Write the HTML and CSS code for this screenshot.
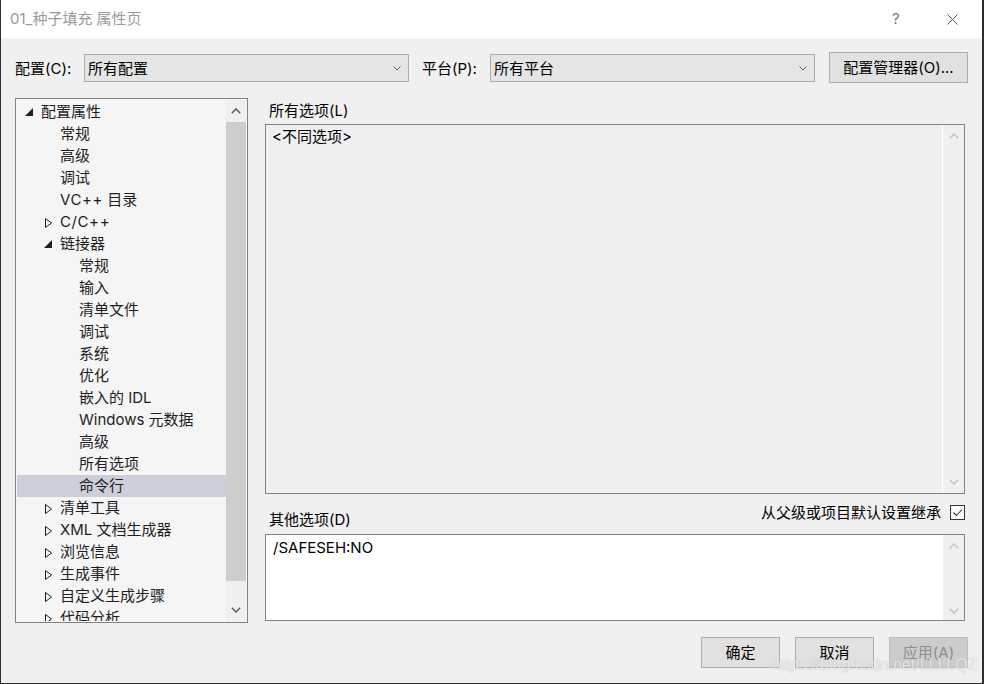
FILE: index.html
```html
<!DOCTYPE html>
<html lang="zh-CN">
<head>
<meta charset="utf-8">
<title>01_种子填充 属性页</title>
<link rel="stylesheet" href="styles.css">
</head>
<body>
<div class="window">
  <div class="titlebar">
    <span class="title">01_种子填充 属性页</span>
    <span class="help">?</span>
    <svg class="close" width="11" height="11" viewBox="0 0 11 11"><path d="M0.5 0.5 L10.5 10.5 M10.5 0.5 L0.5 10.5" stroke="#555" stroke-width="1" fill="none"/></svg>
  </div>
  <div class="content">
    <div class="config-row">
      <span class="lbl lbl-config">配置(C):</span>
      <div class="combo"><span class="combo-text">所有配置</span><svg class="chev" width="8" height="5" viewBox="0 0 8 5"><path d="M0.5 0.5 L4 4 L7.5 0.5" stroke="#606060" stroke-width="1" fill="none"/></svg></div>
      <span class="lbl lbl-platform">平台(P):</span>
      <div class="combo"><span class="combo-text">所有平台</span><svg class="chev" width="8" height="5" viewBox="0 0 8 5"><path d="M0.5 0.5 L4 4 L7.5 0.5" stroke="#606060" stroke-width="1" fill="none"/></svg></div>
      <button class="btn btn-manager">配置管理器(O)...</button>
    </div>
    <div class="main">
      <div class="tree">
        <div class="tree-list">
          <div class="row l0"><span class="tw"><svg width="8" height="8" viewBox="0 0 8 8"><polygon points="8,0 8,8 0,8" fill="#1e1e1e"/></svg></span>配置属性</div>
          <div class="row l1"><span class="tw"></span>常规</div>
          <div class="row l1"><span class="tw"></span>高级</div>
          <div class="row l1"><span class="tw"></span>调试</div>
          <div class="row l1"><span class="tw"></span><span class="pp">VC++</span>&nbsp;目录</div>
          <div class="row l1"><span class="tw tc"><svg width="7" height="10" viewBox="0 0 7 10"><polygon points="0.5,0.5 6.5,5 0.5,9.5" fill="none" stroke="#1e1e1e" stroke-width="1"/></svg></span><span class="pp">C/C++</span></div>
          <div class="row l1"><span class="tw"><svg width="8" height="8" viewBox="0 0 8 8"><polygon points="8,0 8,8 0,8" fill="#1e1e1e"/></svg></span>链接器</div>
          <div class="row l2"><span class="tw"></span>常规</div>
          <div class="row l2"><span class="tw"></span>输入</div>
          <div class="row l2"><span class="tw"></span>清单文件</div>
          <div class="row l2"><span class="tw"></span>调试</div>
          <div class="row l2"><span class="tw"></span>系统</div>
          <div class="row l2"><span class="tw"></span>优化</div>
          <div class="row l2"><span class="tw"></span>嵌入的 IDL</div>
          <div class="row l2"><span class="tw"></span>Windows 元数据</div>
          <div class="row l2"><span class="tw"></span>高级</div>
          <div class="row l2"><span class="tw"></span>所有选项</div>
          <div class="row l2 selected"><span class="tw"></span>命令行</div>
          <div class="row l1"><span class="tw tc"><svg width="7" height="10" viewBox="0 0 7 10"><polygon points="0.5,0.5 6.5,5 0.5,9.5" fill="none" stroke="#1e1e1e" stroke-width="1"/></svg></span>清单工具</div>
          <div class="row l1"><span class="tw tc"><svg width="7" height="10" viewBox="0 0 7 10"><polygon points="0.5,0.5 6.5,5 0.5,9.5" fill="none" stroke="#1e1e1e" stroke-width="1"/></svg></span>XML 文档生成器</div>
          <div class="row l1"><span class="tw tc"><svg width="7" height="10" viewBox="0 0 7 10"><polygon points="0.5,0.5 6.5,5 0.5,9.5" fill="none" stroke="#1e1e1e" stroke-width="1"/></svg></span>浏览信息</div>
          <div class="row l1"><span class="tw tc"><svg width="7" height="10" viewBox="0 0 7 10"><polygon points="0.5,0.5 6.5,5 0.5,9.5" fill="none" stroke="#1e1e1e" stroke-width="1"/></svg></span>生成事件</div>
          <div class="row l1"><span class="tw tc"><svg width="7" height="10" viewBox="0 0 7 10"><polygon points="0.5,0.5 6.5,5 0.5,9.5" fill="none" stroke="#1e1e1e" stroke-width="1"/></svg></span>自定义生成步骤</div>
          <div class="row l1"><span class="tw tc"><svg width="7" height="10" viewBox="0 0 7 10"><polygon points="0.5,0.5 6.5,5 0.5,9.5" fill="none" stroke="#1e1e1e" stroke-width="1"/></svg></span>代码分析</div>
        </div>
        <div class="vscroll">
          <div class="sb-btn"><svg width="10" height="6" viewBox="0 0 10 6"><polyline points="0.8,5.2 5,1 9.2,5.2" fill="none" stroke="#606060" stroke-width="1.6"/></svg></div>
          <div class="sb-track"><div class="sb-thumb"></div></div>
          <div class="sb-btn"><svg width="10" height="6" viewBox="0 0 10 6"><polyline points="0.8,0.8 5,5 9.2,0.8" fill="none" stroke="#606060" stroke-width="1.6"/></svg></div>
        </div>
      </div>
      <div class="right">
        <div class="sect-label">所有选项(L)</div>
        <div class="box box-all">
          <div class="box-text">&lt;不同选项&gt;</div>
          <div class="box-scroll scroll-all">
            <svg width="10" height="6" viewBox="0 0 10 6"><polyline points="0.8,5.2 5,1 9.2,5.2" fill="none" stroke="#c4c4c4" stroke-width="1.6"/></svg>
            <svg width="10" height="6" viewBox="0 0 10 6"><polyline points="0.8,0.8 5,5 9.2,0.8" fill="none" stroke="#c4c4c4" stroke-width="1.6"/></svg>
          </div>
        </div>
        <div class="middle">
          <div class="sect-label other-label">其他选项(D)</div>
          <div class="inherit">
            <span>从父级或项目默认设置继承</span>
            <span class="checkbox"><svg width="13" height="13" viewBox="0 0 13 13"><polyline points="2.5,6.5 5.5,9.5 11,3.5" fill="none" stroke="#333" stroke-width="1.1"/></svg></span>
          </div>
        </div>
        <div class="box box-other">
          <div class="box-text other-text">/SAFESEH:NO</div>
          <div class="box-scroll scroll-other">
            <svg width="10" height="6" viewBox="0 0 10 6"><polyline points="0.8,5.2 5,1 9.2,5.2" fill="none" stroke="#c4c4c4" stroke-width="1.6"/></svg>
            <svg width="10" height="6" viewBox="0 0 10 6"><polyline points="0.8,0.8 5,5 9.2,0.8" fill="none" stroke="#c4c4c4" stroke-width="1.6"/></svg>
          </div>
        </div>
      </div>
    </div>
    <div class="buttons">
      <button class="btn btn-dlg">确定</button>
      <button class="btn btn-dlg">取消</button>
      <button class="btn btn-dlg disabled">应用(A)</button>
    </div>
  </div>
  <div class="watermark">https://blog.csdn.net/LLLLQZ</div>
</div>
</body>
</html>
```
FILE: styles.css
```css
html, body {
  margin: 0;
  padding: 0;
}
body {
  width: 984px;
  height: 684px;
  overflow: hidden;
  background: #f0f0f0;
  font-family: "Inter", "Noto Sans CJK SC", sans-serif;
  font-size: 15px;
  color: #000;
}
.window {
  position: relative;
  width: 984px;
  height: 684px;
  box-sizing: border-box;
  border-left: 1px solid #2e2e2e;
  border-right: 2px solid #2e2e2e;
  border-bottom: 1px solid #2e2e2e;
  background: #f0f0f0;
  display: flex;
  flex-direction: column;
}
.titlebar {
  height: 38px;
  flex: none;
  background: #fff;
  display: flex;
  align-items: center;
  padding-left: 9px;
}
.title {
  flex: 1;
  color: #9a9a9a;
  line-height: 20px;
}
.help {
  width: 8px;
  color: #7a7a7a;
  margin-right: 47px;
  line-height: 20px;
}
.close {
  margin-right: 24px;
}
.content {
  padding: 14px 14px 0 14px;
  display: flex;
  flex-direction: column;
}
.config-row {
  display: flex;
  align-items: flex-start;
  height: 31px;
}
.lbl {
  line-height: 20px;
  margin-top: 7px;
}
.lbl-config {
  width: 69px;
}
.lbl-platform {
  width: 68px;
  margin-left: 13px;
}
.combo {
  width: 325px;
  height: 28px;
  margin-top: 2px;
  box-sizing: border-box;
  border: 1px solid #adadad;
  background: #e5e5e5;
  display: flex;
  align-items: center;
  padding: 1px 7px 0 3px;
}
.combo-text {
  flex: 1;
  line-height: 20px;
}
.chev {
  display: block;
}
.btn {
  font-family: inherit;
  font-size: 15px;
  color: #000;
  background: #e1e1e1;
  border: 1px solid #adadad;
  box-sizing: border-box;
  height: 31px;
  padding: 1px 0 0;
  line-height: 20px;
}
.btn-manager {
  width: 139px;
  margin-left: 14px;
}
.main {
  display: flex;
  margin-top: 15px;
  height: 525px;
}
.tree {
  width: 233px;
  height: 525px;
  box-sizing: border-box;
  border: 1px solid #828282;
  background: #f5f5f5;
  padding: 1px;
  display: flex;
}
.tree-list {
  width: 209px;
  padding-top: 1px;
  overflow: hidden;
  color: #1e1e1e;
}
.row {
  height: 22px;
  box-sizing: border-box;
  padding-bottom: 1px;
  line-height: 21px;
  display: flex;
  align-items: center;
  white-space: nowrap;
}
.pp {
  letter-spacing: 0.6px;
}
.row.l0 { padding-left: 8px; }
.row.l1 { padding-left: 27px; }
.row.l2 { padding-left: 46px; }
.row.selected {
  background: #cccedb;
}
.tw {
  width: 16px;
  flex: none;
  display: flex;
  align-items: center;
}
.tw svg {
  display: block;
  margin-top: 1px;
}
.tw.tc svg {
  margin-left: 1px;
  margin-top: 2px;
}
.vscroll {
  width: 20px;
  display: flex;
  flex-direction: column;
  background: #f0f0f0;
}
.sb-btn {
  height: 22px;
  display: flex;
  align-items: center;
  justify-content: center;
  flex: none;
}
.sb-track {
  flex: 1;
}
.sb-thumb {
  height: 459px;
  background: #cdcdcd;
}
.right {
  width: 700px;
  margin-left: 17px;
  display: flex;
  flex-direction: column;
}
.sect-label {
  height: 26px;
  box-sizing: border-box;
  padding-top: 2px;
  padding-left: 4px;
  line-height: 22px;
}
.box {
  box-sizing: border-box;
  border: 1px solid #828282;
  display: flex;
}
.box-all {
  height: 370px;
  background: #f0f0f0;
}
.box-other {
  height: 87px;
  background: #fff;
}
.box-text {
  flex: 1;
  padding: 2px 6px;
  line-height: 20px;
}
.other-text {
  padding: 3px 7px;
}
.box-scroll {
  width: 21px;
  display: flex;
  flex-direction: column;
  justify-content: space-between;
  align-items: center;
  background: #f0f0f0;
}
.box-scroll svg {
  display: block;
}
.scroll-all {
  border-left: 1px solid #ffffff;
  padding: 8px 0;
}
.scroll-other {
  padding: 8px 0 6px;
}
.middle {
  height: 40px;
  display: flex;
  justify-content: space-between;
}
.other-label {
  margin-top: 13px;
}
.inherit {
  display: flex;
  align-items: center;
  margin-top: 11px;
  height: 15px;
  line-height: 20px;
}
.checkbox {
  width: 15px;
  height: 15px;
  box-sizing: border-box;
  border: 1px solid #333;
  background: #fff;
  margin-left: 9px;
  display: block;
}
.checkbox svg {
  display: block;
}
.buttons {
  display: flex;
  justify-content: flex-end;
  gap: 15px;
  margin-top: 14px;
}
.btn-dlg {
  width: 79px;
}
.btn.disabled {
  background: #cccccc;
  border-color: #bfbfbf;
  color: #8d8d8d;
}
.watermark {
  position: absolute;
  left: 771px;
  top: 656px;
  font-family: "Liberation Sans", sans-serif;
  font-size: 16px;
  line-height: 18px;
  color: rgba(255, 255, 255, 0.75);
  text-shadow: 0 0 1px rgba(120, 120, 120, 0.6);
  white-space: nowrap;
}
```
